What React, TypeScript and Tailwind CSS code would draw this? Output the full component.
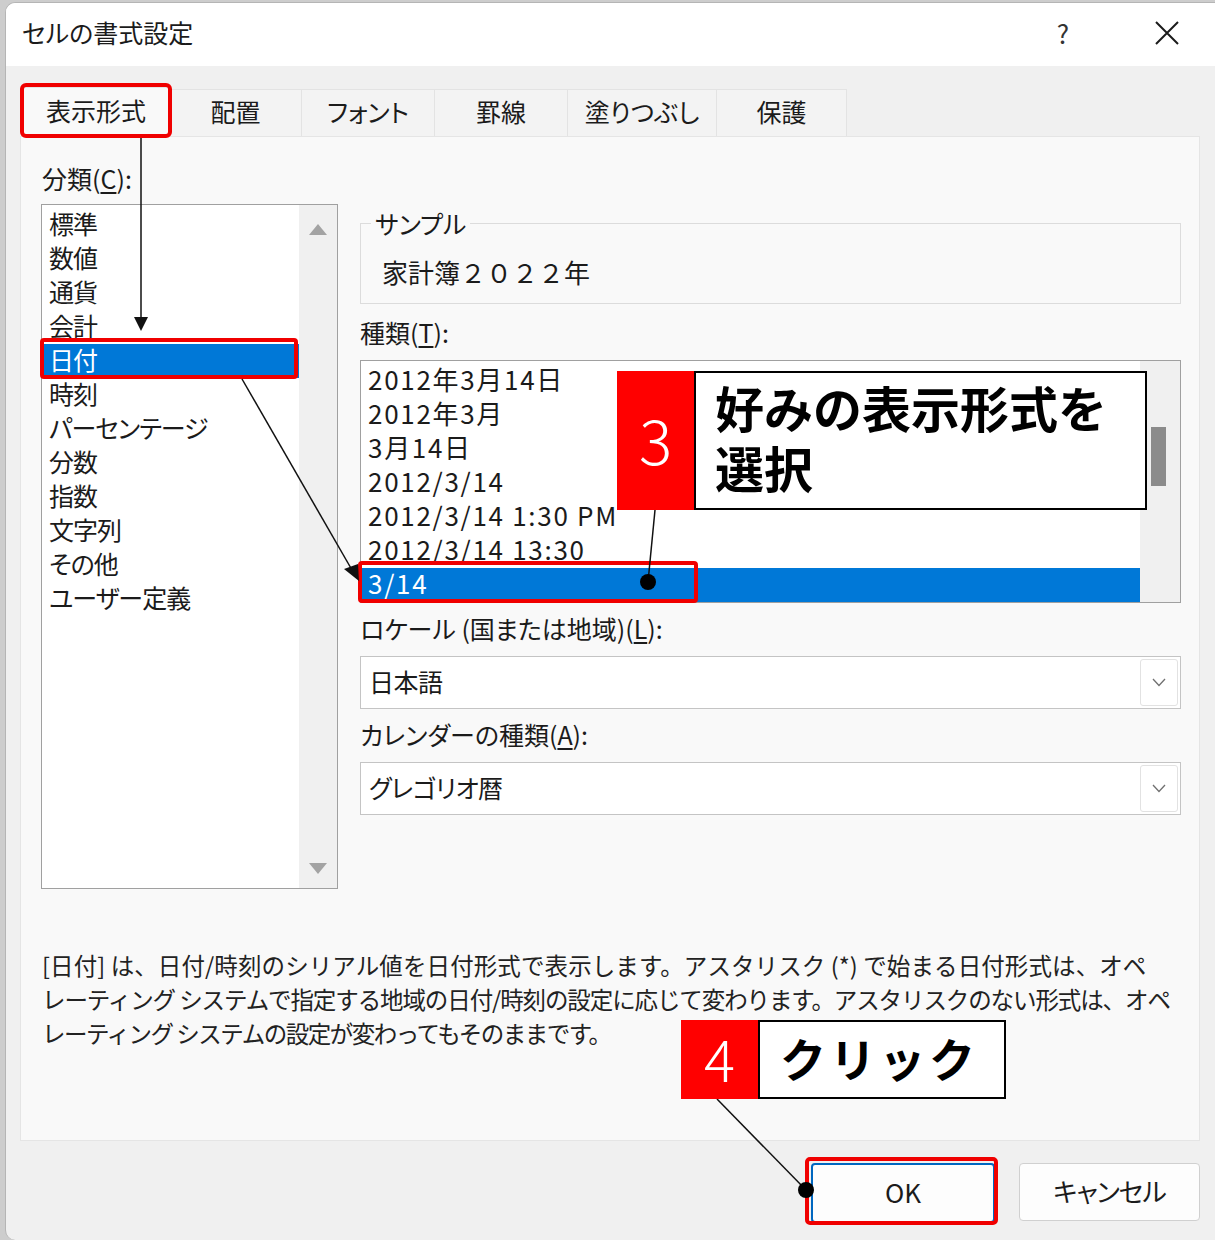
import React from 'react';

const categories = ['標準', '数値', '通貨', '会計', '日付', '時刻', 'パーセンテージ', '分数', '指数', '文字列', 'その他', 'ユーザー定義'];
const types = ['2012年3月14日', '2012年3月', '3月14日', '2012/3/14', '2012/3/14 1:30 PM', '2012/3/14 13:30', '3/14'];
const tabs = [
  { label: '表示形式', w: 'w-[148px]' },
  { label: '配置', w: 'w-[132px]' },
  { label: 'フォント', w: 'w-[133px]' },
  { label: '罫線', w: 'w-[133px]' },
  { label: '塗りつぶし', w: 'w-[149px]' },
  { label: '保護', w: 'w-[130px]' },
];

function Chevron() {
  return (
    <svg width="14" height="9" viewBox="0 0 14 9" fill="none">
      <polyline points="1,1 7,7.5 13,1" stroke="#707070" strokeWidth="1.3" />
    </svg>
  );
}

function Dropdown({ value }: { value: string }) {
  return (
    <div className="mt-[8px] h-[53px] border border-[#c4c4c4] bg-white flex items-center justify-between pl-[8px] pr-[2px]">
      <span className="text-[25px] leading-[34px] tracking-[-0.5px] -mt-[3px]">{value}</span>
      <div className="w-[38px] h-[47px] border border-[#e2e2e2] rounded-[3px] flex items-center justify-center">
        <Chevron />
      </div>
    </div>
  );
}

function Label({ text, u, rest }: { text: string; u: string; rest: string }) {
  return (
    <div className="h-[34px] leading-[28px] text-[25px] text-[#1b1b1b]">
      {text}(<span className="underline underline-offset-[3px]">{u}</span>){rest}
    </div>
  );
}

export default function App() {
  return (
    <div className="relative w-[1215px] h-[1240px] overflow-hidden bg-[#cdcdcd] font-['Noto_Sans_CJK_JP','Noto_Sans',sans-serif] [font-feature-settings:'palt'] text-[#1b1b1b]">
      <div className="flex h-full pt-[2px]">
        <div className="w-[5px] shrink-0" />
        {/* Dialog window */}
        <div className="flex-1 flex flex-col rounded-tl-[10px] rounded-bl-[10px] bg-[#f0f0f0] overflow-hidden border-l border-t border-[#b5b5b5]">
          {/* Title bar */}
          <div className="h-[63px] shrink-0 bg-white flex items-center justify-between pl-[16px] pr-[25px]">
            <span className="text-[25px] leading-[34px] -mt-[5px] text-[#1b1b1b]">セルの書式設定</span>
            <div className="flex items-center -mt-[4px]">
              <span className="w-[46px] text-center text-[26px] text-[#333] mr-[58px]">?</span>
              <div className="w-[46px] flex justify-center">
                <svg width="26" height="26" viewBox="0 0 26 26">
                  <path d="M2 2 L24 24 M24 2 L2 24" stroke="#1b1b1b" strokeWidth="2" />
                </svg>
              </div>
            </div>
          </div>

          {/* Body */}
          <div className="pl-[14px] pt-[21px]">
            <div className="flex items-end h-[49px] ml-[2px]">
              {tabs.map((t, i) =>
                i === 0 ? (
                  <div key={t.label} className={`${t.w} h-[49px] bg-[#f9f9f9] border-t border-x border-[#e5e5e5] flex items-center justify-center pb-[3px] text-[25px]`}>
                    {t.label}
                  </div>
                ) : (
                  <div key={t.label} className={`${t.w} h-[47px] bg-[#f3f3f3] border-t border-r border-[#e3e3e3] flex items-center justify-center pb-[3px] text-[25px]`}>
                    {t.label}
                  </div>
                )
              )}
            </div>

            {/* Panel */}
            <div className="w-[1180px] h-[1005px] bg-[#f9f9f9] border border-[#e5e5e5] flex flex-col pt-[27px] pl-[20px]">
              <div className="flex gap-[22px]">
                {/* Category column */}
                <div className="w-[297px]">
                  <div className="ml-[1px]">
                    <Label text="分類" u="C" rest=":" />
                  </div>
                  <div className="mt-[6px] h-[685px] border border-[#a0a0a0] bg-white flex">
                    <div className="flex-1 pt-[3px] pl-[1px]">
                      {categories.map((c) => (
                        <div key={c} className={`h-[34px] leading-[30px] pl-[6px] text-[25px] tracking-[-1px] ${c === '日付' ? 'bg-[#0078d7] text-white' : ''}`}>
                          {c}
                        </div>
                      ))}
                    </div>
                    <div className="w-[38px] bg-[#f0f0f0] flex flex-col justify-between items-center pt-[19px] pb-[14px]">
                      <svg width="18" height="11" viewBox="0 0 18 11"><polygon points="9,0 18,11 0,11" fill="#a3a3a3" /></svg>
                      <svg width="18" height="11" viewBox="0 0 18 11"><polygon points="0,0 18,0 9,11" fill="#a3a3a3" /></svg>
                    </div>
                  </div>
                </div>

                {/* Right column */}
                <div className="w-[821px]">
                  <fieldset className="mt-[42px] border border-[#dcdcdc] pb-[12px]">
                    <legend className="ml-[10px] px-[4px] text-[25px] leading-[34px]">サンプル</legend>
                    <div className="pl-[21px] pt-[15px] pb-[2px] text-[26px] leading-[34px] [font-feature-settings:normal]">家計簿２０２２年</div>
                  </fieldset>

                  <div className="mt-[14px]">
                    <Label text="種類" u="T" rest=":" />
                  </div>
                  <div className="mt-[8px] h-[243px] border border-[#a0a0a0] bg-white flex">
                    <div className="flex-1 pt-[3px] pl-[1px]">
                      {types.map((t) => (
                        <div key={t} className={`h-[34px] leading-[30px] pl-[6px] text-[26px] tracking-[1.7px] [font-feature-settings:normal] ${t === '3/14' ? 'bg-[#0078d7] text-white' : ''}`}>
                          {t}
                        </div>
                      ))}
                    </div>
                    <div className="w-[40px] bg-[#f0f0f0] pt-[66px] pl-[11px]">
                      <div className="w-[15px] h-[59px] bg-[#8b8b8b]" />
                    </div>
                  </div>

                  <div className="mt-[11px]">
                    <Label text="ロケール (国または地域)" u="L" rest=":" />
                  </div>
                  <Dropdown value="日本語" />

                  <div className="mt-[11px]">
                    <Label text="カレンダーの種類" u="A" rest=":" />
                  </div>
                  <Dropdown value="グレゴリオ暦" />
                </div>
              </div>

              {/* Description */}
              <div className="mt-[61px] pl-[1px] text-[23.5px] text-[#222] [font-feature-settings:normal]">
                <div className="whitespace-nowrap h-[34px] leading-[30px] tracking-[0.1px]">[日付] は、日付/時刻のシリアル値を日付形式で表示します。アスタリスク (*) で始まる日付形式は、オペ</div>
                <div className="whitespace-nowrap h-[34px] leading-[30px] tracking-[-1.1px]">レーティング システムで指定する地域の日付/時刻の設定に応じて変わります。アスタリスクのない形式は、オペ</div>
                <div className="whitespace-nowrap h-[34px] leading-[30px] tracking-[-1.5px]">レーティング システムの設定が変わってもそのままです。</div>
              </div>
            </div>

            {/* Buttons */}
            <div className="flex justify-end gap-[24px] mt-[22px] w-[1180px]">
              <button className="w-[184px] h-[60px] bg-[#fdfdfd] border-2 border-[#0067c0] rounded-[4px] text-[26px] text-[#1b1b1b] pb-[3px]">OK</button>
              <button className="w-[181px] h-[58px] bg-[#fdfdfd] border border-[#d0d0d0] rounded-[4px] text-[26px] text-[#1b1b1b] pb-[3px] tracking-[-1px]">キャンセル</button>
            </div>
          </div>
        </div>
      </div>

      {/* Annotation: red highlight frames */}
      <div className="absolute left-[20px] top-[83px] w-[152px] h-[55px] border-[4px] border-[#f00000] rounded-[6px]" />
      <div className="absolute left-[40px] top-[338px] w-[258px] h-[41px] border-[4px] border-[#f00000] rounded-[4px]" />
      <div className="absolute left-[358px] top-[561px] w-[340px] h-[42px] border-[4px] border-[#f00000] rounded-[4px]" />
      <div className="absolute left-[805px] top-[1157px] w-[193px] h-[68px] border-[4px] border-[#f00000] rounded-[5px]" />

      {/* Annotation: connector lines */}
      <svg className="absolute inset-0 pointer-events-none" width="1215" height="1240">
        <line x1="141" y1="138" x2="141" y2="318" stroke="#111" strokeWidth="1.5" />
        <polygon points="134,317 148,317 141,331" fill="#111" />
        <line x1="242" y1="379" x2="352" y2="570" stroke="#111" strokeWidth="1.5" />
        <polygon points="344,569 358,564 359,581" fill="#111" />
        <line x1="655" y1="510" x2="648" y2="582" stroke="#111" strokeWidth="1.5" />
        <circle cx="648" cy="582" r="8" fill="#000" />
        <line x1="717" y1="1099" x2="806" y2="1190" stroke="#111" strokeWidth="1.5" />
        <circle cx="806" cy="1190" r="8" fill="#000" />
      </svg>

      {/* Callout 3 */}
      <div className="absolute left-[617px] top-[371px] flex h-[139px] [font-feature-settings:normal]">
        <div className="w-[77px] bg-[#ff0000] flex items-center justify-center pb-[4px] text-white text-[62px] font-light">3</div>
        <div className="w-[453px] bg-white border-2 border-black pl-[19px] pt-[4px] text-[49px] leading-[60px] font-bold text-black">
          <p>
            好みの表示形式を
            <br />
            選択
          </p>
        </div>
      </div>

      {/* Callout 4 */}
      <div className="absolute left-[681px] top-[1020px] flex h-[79px] [font-feature-settings:normal]">
        <div className="w-[77px] bg-[#ff0000] flex items-center justify-center pb-[4px] text-white text-[58px] font-light">4</div>
        <div className="w-[248px] bg-white border-2 border-black pl-[20px] pb-[4px] flex items-center text-[46px] font-bold tracking-[0.08em] text-black">
          クリック
        </div>
      </div>
    </div>
  );
}
